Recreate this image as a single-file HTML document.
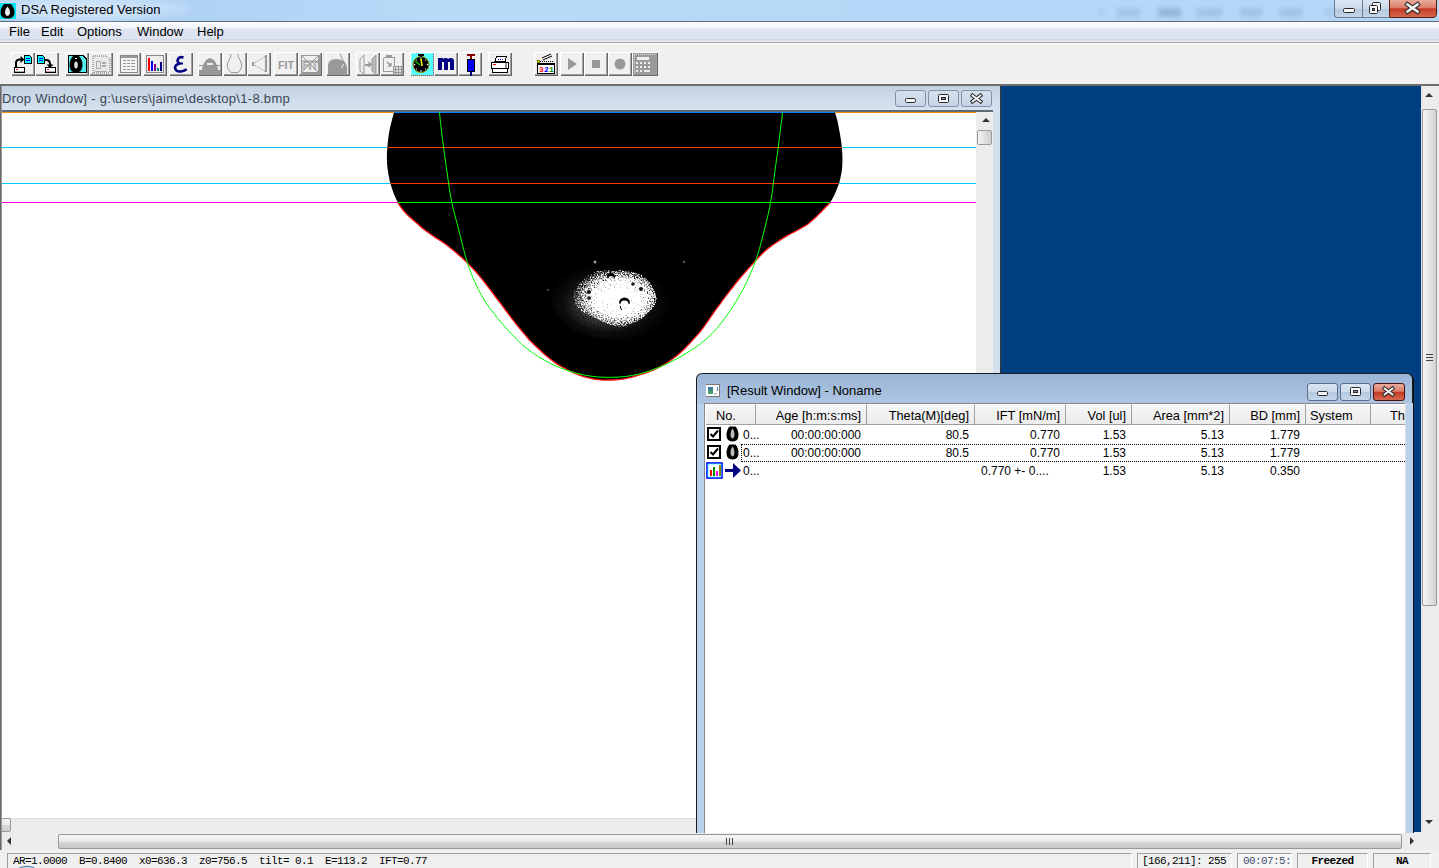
<!DOCTYPE html>
<html><head><meta charset="utf-8">
<style>
*{margin:0;padding:0;box-sizing:border-box}
html,body{width:1439px;height:868px;overflow:hidden;background:#f0f0f0;font-family:"Liberation Sans",sans-serif;font-size:12px;color:#000}
.a{position:absolute}
#title{left:0;top:0;width:1439px;height:22px;background:linear-gradient(to right,#a9cdf1 0%,#b9d9f8 30%,#b5d6f7 100%);border-bottom:1px solid #5d6b7c}
#menu{left:0;top:22px;width:1439px;height:21px;background:linear-gradient(#fbfcfe 0px,#f1f4fa 6px,#dfe4f2 7px,#dde3f1 17px,#c5ccdb 18px,#eef0f6 19px,#eef0f6 20px);border-bottom:1px solid #a0a0a0}
#menu span{position:absolute;top:2px;margin-left:1px;font-size:13px;color:#000}
#toolbar{left:0;top:43px;width:1439px;height:41px;background:#f0f0f0;border-top:1px solid #fff}
.tb{position:absolute;background:#f0f0f0;box-shadow:inset 1px 1px 0 #fff,inset -1px -1px 0 #696969,inset -2px -2px 0 #a0a0a0}
#mdi{left:0;top:84px;width:1439px;height:766px;background:#f0f0f0;border-top:2px solid #6e6e6e}
#blue{left:1001px;top:86px;width:420px;height:746px;background:#003f7f}
.wbtn{position:absolute;border:1px solid #6b7b90;border-radius:3px;background:linear-gradient(#dbe6f3 0%,#cbd9ea 50%,#b4c8e0 51%,#c5d6ea 100%)}
.hdr{position:absolute;top:0;height:21px;border-right:1px solid #a0a0a0;box-shadow:1px 0 0 #fff;font-size:12.8px;line-height:22px;padding:0 4px;text-align:right;white-space:nowrap;overflow:hidden}
.cell{position:absolute;font-size:12px;line-height:20px;text-align:right;white-space:nowrap}
.st{position:absolute;top:853px;height:15px;border-top:1px solid #a0a0a0;border-left:1px solid #a0a0a0;border-right:1px solid #fff;font-family:"Liberation Mono",monospace;font-size:11px;letter-spacing:-0.6px;line-height:15px;white-space:pre}
</style></head><body>
<div id="title" class="a">
  <div class="a" style="left:-20px;top:-4px;width:210px;height:26px;background:radial-gradient(ellipse at 45% 50%,rgba(225,238,250,.85) 0%,rgba(215,232,250,.5) 55%,rgba(190,218,247,0) 80%)"></div>
  <div class="a" style="left:1090px;top:7px;width:240px;height:12px;filter:blur(2.5px);opacity:.6">
   <div class="a" style="left:9px;top:2px;width:5px;height:7px;background:#8aa8c8;opacity:.5"></div>
   <div class="a" style="left:27px;top:1px;width:23px;height:9px;background:#7d9cc0;opacity:.55"></div>
   <div class="a" style="left:68px;top:1px;width:23px;height:9px;background:#6a8ab0;opacity:.7"></div>
   <div class="a" style="left:107px;top:1px;width:25px;height:9px;background:#7d9cc0;opacity:.55"></div>
   <div class="a" style="left:150px;top:1px;width:22px;height:9px;background:#7d9cc0;opacity:.55"></div>
   <div class="a" style="left:189px;top:1px;width:23px;height:9px;background:#7d9cc0;opacity:.55"></div>
   <div class="a" style="left:235px;top:1px;width:10px;height:9px;background:#8aa8c8;opacity:.4"></div>
  </div>
  <div class="a" style="left:0;top:3px;width:16px;height:16px;background:#00e6f0"><svg width="16" height="16"><path d="M4 1 H11 Q14.5 5 14.5 9.5 Q14.5 15.5 7.5 15.5 Q0.5 15.5 0.5 9.5 Q0.5 5 4 1Z" fill="#000"/><path d="M7.5 3.5 Q10 6 10 9 Q10 12.5 7.5 13 Q5 12.5 5 9 Q5 6 7.5 3.5Z" fill="#eee"/></svg></div>
  <div class="a" style="left:21px;top:2px;font-size:13px;">DSA Registered Version</div>
  <div class="wbtn" style="left:1334px;top:-1px;width:29px;height:19px;border-radius:0 0 0 4px;border-right:none"></div>
  <div class="wbtn" style="left:1362px;top:-1px;width:27px;height:19px;border-radius:0;border-left:1px solid #6b7b90;border-right:none"></div>
  <div class="wbtn" style="left:1389px;top:-1px;width:48px;height:19px;border-radius:0 0 4px 0;border-color:#5a1a10;background:linear-gradient(#e9a99c 0%,#dc7e6c 45%,#c53a22 52%,#d56a52 100%)"></div>
</div>
<div id="menu" class="a">
  <span style="left:8px">File</span><span style="left:40px">Edit</span><span style="left:76px">Options</span><span style="left:136px">Window</span><span style="left:196px">Help</span>
</div>
<div id="toolbar" class="a"></div>
<div class="tb" style="left:11px;top:52px;width:24px;height:24px"><svg width="24" height="24" style="position:absolute;left:0;top:0" shape-rendering="crispEdges"><rect x="3.5" y="15.5" width="10" height="5" fill="#fff" stroke="#000"/><rect x="5" y="17" width="2" height="1" fill="#f00"/><rect x="4" y="19" width="9" height="1" fill="#aaa"/><path d="M5 15 V11 Q5 7.5 9 7.5 H10" fill="none" stroke="#000" stroke-width="2" shape-rendering="auto"/><path d="M9.5 4 L13.5 7.5 L9.5 11Z" fill="#000" shape-rendering="auto"/><path d="M13.5 3.5 H18.5 L20.5 5.5 V11.5 H13.5Z" fill="#0ff" stroke="#000"/><path d="M15 6.5h4M15 8.5h4" stroke="#00c"/></svg></div>
<div class="tb" style="left:35px;top:52px;width:24px;height:24px"><svg width="24" height="24" style="position:absolute;left:0;top:0" shape-rendering="crispEdges"><rect x="10.5" y="15.5" width="10" height="5" fill="#fff" stroke="#000"/><rect x="12" y="17" width="2" height="1" fill="#f00"/><rect x="11" y="19" width="9" height="1" fill="#aaa"/><path d="M10 8 H11 Q15 8 15 12 V13" fill="none" stroke="#000" stroke-width="2" shape-rendering="auto"/><path d="M11.5 12.5 L15 16 L18.5 12.5Z" fill="#000" shape-rendering="auto"/><path d="M2.5 3.5 H7.5 L9.5 5.5 V11.5 H2.5Z" fill="#0ff" stroke="#000"/><path d="M4 6.5h4M4 8.5h4" stroke="#00c"/></svg></div>
<div class="tb" style="left:65px;top:52px;width:24px;height:24px"><svg width="24" height="24" style="position:absolute;left:0;top:0" shape-rendering="crispEdges"><path d="M3.5 3.5 H18 L21.5 7 V20.5 H3.5Z" fill="#5ee" stroke="#000" stroke-width="1.5"/><path d="M3.5 3.5 H18 L21.5 7 V20.5 H3.5Z" fill="none" stroke="#000" stroke-width="1"/><g shape-rendering="auto"><path d="M8 4 H14 Q17.5 8 17.5 13 Q17.5 20.5 11 20.5 Q4.5 20.5 4.5 13 Q4.5 8 8 4Z" fill="#000"/><ellipse cx="11" cy="13" rx="1.8" ry="3.6" fill="#ddd"/><rect x="10" y="6" width="2" height="1" fill="#fff"/></g></svg></div>
<div class="tb" style="left:89px;top:52px;width:24px;height:24px"><svg width="24" height="24" style="position:absolute;left:0;top:0" shape-rendering="crispEdges"><path d="M3.5 3.5 H17 L20.5 7 V20.5 H3.5Z" fill="#e8e8e8" stroke="#aaa" stroke-width="2" stroke-dasharray="1 1"/><rect x="7.5" y="9.5" width="4" height="7" fill="none" stroke="#aaa"/><path d="M13 11h4M13 14h4" stroke="#aaa" stroke-width="2"/><path d="M6 19h12" stroke="#aaa"/></svg></div>
<div class="tb" style="left:117px;top:52px;width:24px;height:24px"><svg width="24" height="24" style="position:absolute;left:0;top:0" shape-rendering="crispEdges"><rect x="3.5" y="3.5" width="17" height="17" fill="#f4f4f4" stroke="#888"/><rect x="4" y="4" width="16" height="2" fill="#999"/><path d="M6 8.5h3M10 8.5h3M14 8.5h4M6 11.5h3M10 11.5h3M14 11.5h4M6 14.5h3M10 14.5h3M14 14.5h4M6 17.5h3M10 17.5h3M14 17.5h4" stroke="#999"/></svg></div>
<div class="tb" style="left:143px;top:52px;width:24px;height:24px"><svg width="24" height="24" style="position:absolute;left:0;top:0" shape-rendering="crispEdges"><rect x="3.5" y="3.5" width="17" height="17" fill="#eee" stroke="#888"/><rect x="5" y="6" width="2" height="13" fill="#f00"/><rect x="8" y="9" width="2" height="10" fill="#00f"/><rect x="11" y="12" width="2" height="7" fill="#808"/><rect x="14" y="16" width="2" height="3" fill="#088"/><rect x="17" y="10" width="2" height="9" fill="#008"/></svg></div>
<div class="tb" style="left:169px;top:52px;width:24px;height:24px"><svg width="24" height="24" style="position:absolute;left:0;top:0" shape-rendering="crispEdges"><g shape-rendering="auto"><path d="M14.5 5.5 Q9 4 8.5 9 Q9 11 11 11.5 Q6 12.5 6 16 Q7 20 12 19.5 Q16 19 17.5 17" fill="none" stroke="#000080" stroke-width="2.6"/><path d="M10 11.5 H14" stroke="#000080" stroke-width="2"/></g></svg></div>
<div class="tb" style="left:198px;top:52px;width:24px;height:24px"><svg width="24" height="24" style="position:absolute;left:0;top:0" shape-rendering="crispEdges"><rect x="1" y="18" width="22" height="5" fill="#999"/><g shape-rendering="auto"><path d="M4 18 Q5 8 12 6 Q19 8 20 18Z" fill="#999"/></g><rect x="9" y="11" width="6" height="2" fill="#eee"/><path d="M1 13.5 H6 M18 13.5 H23" stroke="#999"/></svg></div>
<div class="tb" style="left:223px;top:52px;width:24px;height:24px"><svg width="24" height="24" style="position:absolute;left:0;top:0" shape-rendering="crispEdges"><g shape-rendering="auto"><path d="M8 2 Q8 6 5.5 9 Q3 13 5 17 L8 20.5 H15 L18 17 Q20 13 17.5 9 Q15 6 15 2" fill="none" stroke="#999"/></g></svg></div>
<div class="tb" style="left:247px;top:52px;width:24px;height:24px"><svg width="24" height="24" style="position:absolute;left:0;top:0" shape-rendering="crispEdges"><g shape-rendering="auto"><path d="M18 4.5 L6 12 L18 19.5" fill="none" stroke="#999" stroke-dasharray="1.5 1.2"/></g><rect x="5" y="10" width="2" height="4" fill="#999"/><rect x="18" y="3" width="2" height="17" fill="#999"/></svg></div>
<div class="tb" style="left:274px;top:52px;width:24px;height:24px"><svg width="24" height="24" style="position:absolute;left:0;top:0" shape-rendering="crispEdges"><text x="4" y="17" font-family="Liberation Sans" font-size="11.5" font-weight="bold" fill="#999" shape-rendering="auto" textLength="16" lengthAdjust="spacingAndGlyphs">FIT</text></svg></div>
<div class="tb" style="left:298px;top:52px;width:24px;height:24px"><svg width="24" height="24" style="position:absolute;left:0;top:0" shape-rendering="crispEdges"><path d="M23 1 V23 H1Z" fill="#999"/><rect x="3.5" y="3.5" width="17" height="17" fill="#eee" stroke="#999"/><g shape-rendering="auto"><path d="M3 3 L21 21 M21 3 L3 21" stroke="#999"/></g><text x="4" y="17" font-family="Liberation Sans" font-size="11.5" font-weight="bold" fill="none" stroke="#999" stroke-width=".8" textLength="16" lengthAdjust="spacingAndGlyphs">FIT</text></svg></div>
<div class="tb" style="left:326px;top:52px;width:24px;height:24px"><svg width="24" height="24" style="position:absolute;left:0;top:0" shape-rendering="crispEdges"><g shape-rendering="auto"><path d="M2 23 V14 Q2 7 10 7 Q21 7 21 17 V23Z" fill="#999"/><path d="M14 1.5 L21 18" stroke="#999"/><path d="M16 16 Q16 13 18 12" stroke="#eee" fill="none"/></g></svg></div>
<div class="tb" style="left:356px;top:52px;width:24px;height:24px"><svg width="24" height="24" style="position:absolute;left:0;top:0" shape-rendering="crispEdges"><g shape-rendering="auto"><path d="M8 3 L4 7 V19 L8 22Z" fill="none" stroke="#999"/><path d="M20 3 L16 7 V19 L20 22Z" fill="#bbb" stroke="#999"/></g><path d="M9 12.5 H13" stroke="#999" stroke-width="2"/><g shape-rendering="auto"><path d="M12.5 9 L16 12.5 L12.5 16Z" fill="#999"/></g></svg></div>
<div class="tb" style="left:380px;top:52px;width:24px;height:24px"><svg width="24" height="24" style="position:absolute;left:0;top:0" shape-rendering="crispEdges"><rect x="3.5" y="5.5" width="11" height="14" rx="1.5" fill="none" stroke="#999"/><rect x="6" y="3" width="6" height="3" fill="#999"/><g shape-rendering="auto"><path d="M7 10 L11 14 M11 14 V11 M11 14 H8" stroke="#999" stroke-width="1.5"/></g><rect x="13.5" y="14.5" width="8" height="8" fill="#ddd" stroke="#999"/><path d="M15.5 15v7M18.5 15v7M14 17.5h7M14 20.5h7" stroke="#999"/></svg></div>
<div class="tb" style="left:410px;top:52px;width:24px;height:24px"><svg width="24" height="24" style="position:absolute;left:0;top:0" shape-rendering="crispEdges"><rect x="1" y="1" width="22" height="22" fill="#5ff"/><path d="M1 1h22v22h-22z" fill="none" stroke="#eee" stroke-dasharray="1 1" opacity=".6"/><g shape-rendering="auto"><circle cx="11" cy="12.5" r="8" fill="#000" stroke="#aa9900" stroke-width="1"/></g><rect x="8" y="2" width="6" height="2" fill="#000"/><rect x="10" y="3" width="2" height="2" fill="#000"/><g shape-rendering="auto"><path d="M5 9 L10 13" stroke="#0c0" stroke-width="1.3"/><path d="M11 7 L12 14" stroke="#ff0" stroke-width="1.6"/><circle cx="11" cy="6" r=".8" fill="#fff"/><circle cx="11" cy="19" r=".8" fill="#fff"/><circle cx="4.5" cy="12.5" r=".8" fill="#fff"/><circle cx="17.5" cy="12.5" r=".8" fill="#fff"/><circle cx="6.5" cy="8" r=".6" fill="#fff"/><circle cx="15.5" cy="8" r=".6" fill="#fff"/><circle cx="6.5" cy="17" r=".6" fill="#fff"/><circle cx="15.5" cy="17" r=".6" fill="#fff"/></g></svg></div>
<div class="tb" style="left:434px;top:52px;width:24px;height:24px"><svg width="24" height="24" style="position:absolute;left:0;top:0" shape-rendering="crispEdges"><path d="M4 6 H9 V7 Q10 6 12 6 Q13.5 6 14 7 Q15 6 17 6 Q20 6 20 9 V18 H16 V10 H14 V18 H10 V10 H8 V18 H4Z" fill="#000080" shape-rendering="auto"/></svg></div>
<div class="tb" style="left:458px;top:52px;width:24px;height:24px"><svg width="24" height="24" style="position:absolute;left:0;top:0" shape-rendering="crispEdges"><rect x="9" y="2" width="8" height="2" fill="#800000"/><rect x="12" y="4" width="2" height="4" fill="#800000"/><rect x="9.5" y="7.5" width="7" height="12" fill="#00f" stroke="#000"/><rect x="12" y="20" width="2" height="4" fill="#000080"/></svg></div>
<div class="tb" style="left:488px;top:52px;width:24px;height:24px"><svg width="24" height="24" style="position:absolute;left:0;top:0" shape-rendering="crispEdges"><path d="M8.5 4.5 H18.5 L17 9.5 H7Z" fill="#fff" stroke="#000"/><path d="M10 7 h6" stroke="#00c" stroke-dasharray="1 1"/><rect x="3.5" y="10.5" width="17" height="6" rx="1" fill="#fff" stroke="#000" stroke-width="1.3"/><rect x="4.5" y="16.5" width="15" height="4" rx="1" fill="#fff" stroke="#000" stroke-width="1.3"/><rect x="5" y="12" width="3" height="1" fill="#f00"/><rect x="17" y="11" width="2" height="5" fill="#999"/></svg></div>
<div class="tb" style="left:534px;top:52px;width:24px;height:24px"><svg width="24" height="24" style="position:absolute;left:0;top:0" shape-rendering="crispEdges"><g shape-rendering="auto"><path d="M8 6 L17 2 M9 8 L18 4" stroke="#000" stroke-width="1"/></g><rect x="3" y="8" width="2.5" height="2.5" fill="#ff0" stroke="#000" stroke-width=".5"/><rect x="3.5" y="11.5" width="17" height="10" fill="#fff" stroke="#000" stroke-width="1.4"/><rect x="4" y="11" width="16" height="2" fill="#000"/><path d="M6 9.5 L19 9.5" stroke="#000" stroke-dasharray="1 1"/><text x="5" y="20" font-family="Liberation Mono" font-size="8" font-weight="bold" fill="#f00">3</text><text x="10" y="20" font-family="Liberation Mono" font-size="8" font-weight="bold" fill="#00f">2</text><text x="15" y="20" font-family="Liberation Mono" font-size="8" font-weight="bold" fill="#080">1</text></svg></div>
<div class="tb" style="left:560px;top:52px;width:24px;height:24px"><svg width="24" height="24" style="position:absolute;left:0;top:0" shape-rendering="crispEdges"><path d="M8 6 L17 12 L8 18Z" fill="#999" shape-rendering="auto"/></svg></div>
<div class="tb" style="left:584px;top:52px;width:24px;height:24px"><svg width="24" height="24" style="position:absolute;left:0;top:0" shape-rendering="crispEdges"><rect x="8" y="8" width="8" height="8" fill="#999"/></svg></div>
<div class="tb" style="left:608px;top:52px;width:24px;height:24px"><svg width="24" height="24" style="position:absolute;left:0;top:0" shape-rendering="crispEdges"><circle cx="12" cy="12" r="5.5" fill="#999" shape-rendering="auto"/></svg></div>
<div class="tb" style="left:632px;top:52px;width:26px;height:24px"><svg width="26" height="24" style="position:absolute;left:0;top:0" shape-rendering="crispEdges"><rect x="1" y="1" width="24" height="22" fill="#9a9a9a"/><path d="M2 2.5h22" stroke="#ddd" stroke-dasharray="1 1"/><path d="M2 3v19" stroke="#ddd" stroke-dasharray="1 1"/><rect x="5" y="5" width="12" height="3" fill="#eee"/><path d="M4 10.5h2M8 10.5h2M12 10.5h2M16 10.5h2M4 14.5h2M8 14.5h2M12 14.5h2M16 14.5h2M4 18.5h2M8 18.5h2M12 18.5h6" stroke="#eee" stroke-width="2"/></svg></div>
<div id="mdi" class="a"></div>
<div id="blue" class="a"></div>
<!-- drop window -->
<div class="a" style="left:0;top:86px;width:1001px;height:764px;background:#d3e0ee;border-left:2px solid #707070;border-right:1px solid #3a3a3a">
  <div class="a" style="left:0;top:0;width:998px;height:24px;background:linear-gradient(#c3d2e2,#d6e2ef)"></div>
  <div class="a" style="left:0;top:5px;font-size:13px;letter-spacing:0.3px;color:#3a4656">Drop Window] - g:\users\jaime\desktop\1-8.bmp</div>
  <div class="wbtn" style="left:893px;top:4px;width:31px;height:17px;border-color:#8090a8;background:linear-gradient(#d5e0ec,#c5d4e5)"></div>
  <div class="wbtn" style="left:926px;top:4px;width:31px;height:17px;border-color:#8090a8;background:linear-gradient(#d5e0ec,#c5d4e5)"></div>
  <div class="wbtn" style="left:959px;top:4px;width:31px;height:17px;border-color:#8090a8;background:linear-gradient(#d5e0ec,#c5d4e5)"></div>
  <div class="a" style="left:-2px;top:24px;width:993px;height:2px;background:#5f6a75"></div>
  <div class="a" style="left:974px;top:26px;width:17px;height:706px;background:#ececec"></div>
  <div class="a" style="left:980px;top:32px;width:0;height:0;border-left:4px solid transparent;border-right:4px solid transparent;border-bottom:4px solid #333"></div>
  <div class="a" style="left:975px;top:44px;width:15px;height:15px;border:1px solid #999;border-radius:2px;background:linear-gradient(to right,#f5f5f5,#e0e0e0 50%,#cfcfcf)"></div>
  <div class="a" style="left:-2px;top:732px;width:976px;height:15px;background:#ececec;border-top:1px solid #e0e0e0"></div>
  <div class="a" style="left:-4px;top:732px;width:13px;height:14px;border:1px solid #999;border-radius:2px;background:linear-gradient(#f3f3f3,#ececec 50%,#d6d6d6 51%,#cfcfcf)"></div>
</div>
<svg class="a" style="left:0;top:0" width="1439" height="868">
 <defs><clipPath id="cd"><path d="M834.8,112.0 C835.2,113.2 836.3,116.3 837.1,119.5 C837.9,122.7 838.7,127.2 839.4,131.0 C840.1,134.8 840.8,138.4 841.3,142.6 C841.8,146.8 842.3,152.2 842.4,156.4 C842.5,160.6 842.4,164.5 842.1,167.9 C841.8,171.3 841.1,174.5 840.6,177.1 C840.1,179.7 840.0,180.6 839.0,183.5 C838.0,186.4 836.1,191.2 834.6,194.4 C833.1,197.6 831.5,200.3 830.1,202.4 C828.7,204.5 827.4,205.4 826.0,206.8 C824.6,208.3 823.2,209.7 821.8,211.2 C820.4,212.6 819.0,214.0 817.6,215.4 C816.1,216.8 814.7,218.2 813.2,219.6 C811.7,220.9 810.2,222.2 808.6,223.4 C807.0,224.6 805.3,225.7 803.6,226.8 C801.9,227.8 800.2,228.7 798.4,229.7 C796.6,230.7 794.8,231.5 793.1,232.5 C791.3,233.4 789.5,234.4 787.8,235.4 C786.0,236.4 784.3,237.4 782.6,238.4 C780.9,239.5 779.2,240.6 777.5,241.7 C775.8,242.8 774.1,243.9 772.5,245.1 C770.9,246.3 769.3,247.5 767.7,248.7 C766.2,250.0 764.7,251.3 763.2,252.7 C761.8,254.1 760.4,255.5 759.0,257.0 C757.6,258.4 756.3,259.9 754.9,261.4 C753.6,262.9 752.2,264.4 750.9,265.9 C749.5,267.4 748.2,268.9 746.8,270.4 C745.5,271.9 744.2,273.4 742.8,274.9 C741.5,276.4 740.2,277.9 738.9,279.5 C737.7,281.0 736.4,282.6 735.1,284.1 C733.9,285.7 732.6,287.3 731.4,288.9 C730.1,290.4 728.9,292.0 727.7,293.6 C726.4,295.2 725.2,296.8 724.0,298.4 C722.8,300.0 721.6,301.7 720.5,303.3 C719.3,304.9 718.1,306.5 716.9,308.2 C715.7,309.8 714.6,311.4 713.4,313.1 C712.2,314.7 711.1,316.4 710.0,318.0 C708.9,319.7 707.8,321.4 706.6,323.0 C705.5,324.7 704.3,326.3 703.1,327.9 C701.9,329.5 700.6,331.1 699.3,332.6 C698.0,334.1 696.7,335.6 695.4,337.1 C694.0,338.6 692.7,340.1 691.3,341.6 C690.0,343.1 688.6,344.6 687.2,346.0 C685.8,347.5 684.5,348.9 683.0,350.3 C681.5,351.7 680.1,353.0 678.5,354.3 C677.0,355.6 675.4,356.9 673.8,358.1 C672.2,359.3 670.6,360.4 668.9,361.5 C667.2,362.6 665.5,363.7 663.8,364.7 C662.0,365.7 660.3,366.7 658.5,367.6 C656.7,368.5 654.9,369.4 653.1,370.2 C651.2,371.0 649.4,371.7 647.5,372.4 C645.6,373.1 643.7,373.6 641.8,374.2 C639.8,374.8 637.9,375.4 636.0,376.0 C634.1,376.5 632.1,377.1 630.2,377.6 C628.3,378.1 626.3,378.5 624.3,378.9 C622.4,379.2 620.4,379.4 618.4,379.6 C616.4,379.8 614.4,379.9 612.4,380.0 C610.4,380.1 608.4,380.1 606.4,380.1 C604.4,380.1 602.4,380.1 600.4,379.9 C598.4,379.8 596.4,379.5 594.4,379.2 C592.5,378.9 590.5,378.4 588.6,377.9 C586.6,377.4 584.7,376.9 582.8,376.3 C580.9,375.6 579.0,375.0 577.1,374.2 C575.2,373.5 573.4,372.7 571.6,371.9 C569.8,371.1 567.9,370.2 566.2,369.2 C564.4,368.3 562.6,367.3 560.9,366.3 C559.2,365.3 557.5,364.2 555.8,363.1 C554.2,362.0 552.5,360.8 550.9,359.6 C549.3,358.4 547.8,357.1 546.2,355.8 C544.7,354.5 543.2,353.2 541.7,351.8 C540.2,350.5 538.8,349.1 537.3,347.7 C535.9,346.3 534.4,344.9 533.0,343.5 C531.6,342.1 530.2,340.6 528.8,339.2 C527.5,337.7 526.2,336.2 524.9,334.6 C523.6,333.1 522.3,331.5 521.0,330.0 C519.7,328.4 518.4,326.9 517.2,325.3 C515.9,323.8 514.7,322.2 513.5,320.6 C512.2,319.0 511.0,317.4 509.8,315.8 C508.6,314.2 507.4,312.6 506.2,311.0 C505.0,309.4 503.8,307.7 502.6,306.1 C501.4,304.5 500.2,302.9 499.0,301.3 C497.7,299.7 496.5,298.1 495.3,296.5 C494.1,294.9 492.9,293.3 491.7,291.7 C490.5,290.1 489.3,288.5 488.1,286.9 C486.8,285.3 485.6,283.7 484.4,282.1 C483.1,280.5 481.9,278.9 480.6,277.4 C479.3,275.8 478.0,274.3 476.7,272.8 C475.4,271.3 474.0,269.8 472.6,268.3 C471.3,266.9 469.9,265.4 468.4,264.0 C467.0,262.6 465.6,261.2 464.1,259.8 C462.6,258.4 461.1,257.1 459.6,255.8 C458.1,254.5 456.6,253.1 455.1,251.8 C453.5,250.5 452.0,249.2 450.4,248.0 C448.9,246.7 447.3,245.5 445.7,244.3 C444.0,243.1 442.4,242.0 440.7,240.9 C439.0,239.8 437.3,238.7 435.6,237.6 C434.0,236.5 432.3,235.5 430.6,234.3 C429.0,233.2 427.3,232.0 425.8,230.8 C424.2,229.6 422.6,228.3 421.1,227.0 C419.6,225.7 418.1,224.3 416.6,223.0 C415.1,221.7 413.5,220.4 412.0,219.0 C410.5,217.7 409.0,216.4 407.6,215.0 C406.2,213.6 404.8,212.1 403.5,210.6 C402.3,209.1 400.9,207.2 400.0,205.8 C399.1,204.4 398.9,204.3 397.9,202.4 C396.9,200.5 395.4,197.6 394.1,194.4 C392.9,191.2 391.2,186.4 390.4,183.5 C389.5,180.6 389.5,179.7 389.0,177.1 C388.5,174.5 387.9,171.3 387.5,167.9 C387.1,164.5 386.8,160.6 386.9,156.4 C386.9,152.2 387.4,146.8 387.8,142.6 C388.2,138.4 388.7,134.8 389.4,131.0 C390.1,127.2 391.3,122.7 392.1,119.5 C392.9,116.3 393.8,113.2 394.1,112.0 Z"/></clipPath>
 <clipPath id="low"><rect x="0" y="203" width="1000" height="300"/></clipPath>
 <radialGradient id="halo" cx="45%" cy="55%" r="50%"><stop offset="0" stop-color="#fff" stop-opacity=".6"/><stop offset="0.45" stop-color="#fff" stop-opacity=".3"/><stop offset="0.7" stop-color="#fff" stop-opacity=".08"/><stop offset="1" stop-color="#fff" stop-opacity="0"/></radialGradient>
 <radialGradient id="core" cx="55%" cy="50%" r="55%"><stop offset="0" stop-color="#fff" stop-opacity="1"/><stop offset="0.55" stop-color="#fff" stop-opacity=".85"/><stop offset="1" stop-color="#fff" stop-opacity="0.4"/></radialGradient>
 <filter id="nz" x="-30%" y="-30%" width="160%" height="160%">
  <feTurbulence type="fractalNoise" baseFrequency="0.7" numOctaves="2" seed="7" result="n"/>
  <feColorMatrix in="n" type="matrix" values="0 0 0 0 0  0 0 0 0 0  0 0 0 0 0  1 0 0 0 0" result="na"/>
  <feComposite in="SourceAlpha" in2="na" operator="arithmetic" k1="0" k2="3" k3="-3" k4="0.25" result="c"/>
  <feColorMatrix in="c" type="matrix" values="0 0 0 0 1  0 0 0 0 1  0 0 0 0 1  0 0 0 1 0"/>
 </filter>
 <filter id="nz2" x="-30%" y="-30%" width="160%" height="160%">
  <feTurbulence type="fractalNoise" baseFrequency="0.9" numOctaves="1" seed="3" result="n"/>
  <feColorMatrix in="n" type="matrix" values="0 0 0 0 0  0 0 0 0 0  0 0 0 0 0  1 0 0 0 0" result="na"/>
  <feComposite in="SourceAlpha" in2="na" operator="arithmetic" k1="1.3" k2="0" k3="0" k4="0" result="c"/>
  <feColorMatrix in="c" type="matrix" values="0 0 0 0 1  0 0 0 0 1  0 0 0 0 1  0 0 0 1 0"/>
 </filter>
 </defs>
 <rect x="2" y="112" width="974" height="706" fill="#fff"/>
 <line x1="2" x2="976" y1="112.5" y2="112.5" stroke="#ff8c00" stroke-width="1"/>
 <line x1="2" x2="976" y1="147.5" y2="147.5" stroke="#00c8ff" stroke-width="1"/>
 <line x1="2" x2="976" y1="183.5" y2="183.5" stroke="#00c8ff" stroke-width="1"/>
 <line x1="2" x2="976" y1="202.5" y2="202.5" stroke="#ff00dc" stroke-width="1"/>
 <path d="M834.8,112.0 C835.2,113.2 836.3,116.3 837.1,119.5 C837.9,122.7 838.7,127.2 839.4,131.0 C840.1,134.8 840.8,138.4 841.3,142.6 C841.8,146.8 842.3,152.2 842.4,156.4 C842.5,160.6 842.4,164.5 842.1,167.9 C841.8,171.3 841.1,174.5 840.6,177.1 C840.1,179.7 840.0,180.6 839.0,183.5 C838.0,186.4 836.1,191.2 834.6,194.4 C833.1,197.6 831.5,200.3 830.1,202.4 C828.7,204.5 827.4,205.4 826.0,206.8 C824.6,208.3 823.2,209.7 821.8,211.2 C820.4,212.6 819.0,214.0 817.6,215.4 C816.1,216.8 814.7,218.2 813.2,219.6 C811.7,220.9 810.2,222.2 808.6,223.4 C807.0,224.6 805.3,225.7 803.6,226.8 C801.9,227.8 800.2,228.7 798.4,229.7 C796.6,230.7 794.8,231.5 793.1,232.5 C791.3,233.4 789.5,234.4 787.8,235.4 C786.0,236.4 784.3,237.4 782.6,238.4 C780.9,239.5 779.2,240.6 777.5,241.7 C775.8,242.8 774.1,243.9 772.5,245.1 C770.9,246.3 769.3,247.5 767.7,248.7 C766.2,250.0 764.7,251.3 763.2,252.7 C761.8,254.1 760.4,255.5 759.0,257.0 C757.6,258.4 756.3,259.9 754.9,261.4 C753.6,262.9 752.2,264.4 750.9,265.9 C749.5,267.4 748.2,268.9 746.8,270.4 C745.5,271.9 744.2,273.4 742.8,274.9 C741.5,276.4 740.2,277.9 738.9,279.5 C737.7,281.0 736.4,282.6 735.1,284.1 C733.9,285.7 732.6,287.3 731.4,288.9 C730.1,290.4 728.9,292.0 727.7,293.6 C726.4,295.2 725.2,296.8 724.0,298.4 C722.8,300.0 721.6,301.7 720.5,303.3 C719.3,304.9 718.1,306.5 716.9,308.2 C715.7,309.8 714.6,311.4 713.4,313.1 C712.2,314.7 711.1,316.4 710.0,318.0 C708.9,319.7 707.8,321.4 706.6,323.0 C705.5,324.7 704.3,326.3 703.1,327.9 C701.9,329.5 700.6,331.1 699.3,332.6 C698.0,334.1 696.7,335.6 695.4,337.1 C694.0,338.6 692.7,340.1 691.3,341.6 C690.0,343.1 688.6,344.6 687.2,346.0 C685.8,347.5 684.5,348.9 683.0,350.3 C681.5,351.7 680.1,353.0 678.5,354.3 C677.0,355.6 675.4,356.9 673.8,358.1 C672.2,359.3 670.6,360.4 668.9,361.5 C667.2,362.6 665.5,363.7 663.8,364.7 C662.0,365.7 660.3,366.7 658.5,367.6 C656.7,368.5 654.9,369.4 653.1,370.2 C651.2,371.0 649.4,371.7 647.5,372.4 C645.6,373.1 643.7,373.6 641.8,374.2 C639.8,374.8 637.9,375.4 636.0,376.0 C634.1,376.5 632.1,377.1 630.2,377.6 C628.3,378.1 626.3,378.5 624.3,378.9 C622.4,379.2 620.4,379.4 618.4,379.6 C616.4,379.8 614.4,379.9 612.4,380.0 C610.4,380.1 608.4,380.1 606.4,380.1 C604.4,380.1 602.4,380.1 600.4,379.9 C598.4,379.8 596.4,379.5 594.4,379.2 C592.5,378.9 590.5,378.4 588.6,377.9 C586.6,377.4 584.7,376.9 582.8,376.3 C580.9,375.6 579.0,375.0 577.1,374.2 C575.2,373.5 573.4,372.7 571.6,371.9 C569.8,371.1 567.9,370.2 566.2,369.2 C564.4,368.3 562.6,367.3 560.9,366.3 C559.2,365.3 557.5,364.2 555.8,363.1 C554.2,362.0 552.5,360.8 550.9,359.6 C549.3,358.4 547.8,357.1 546.2,355.8 C544.7,354.5 543.2,353.2 541.7,351.8 C540.2,350.5 538.8,349.1 537.3,347.7 C535.9,346.3 534.4,344.9 533.0,343.5 C531.6,342.1 530.2,340.6 528.8,339.2 C527.5,337.7 526.2,336.2 524.9,334.6 C523.6,333.1 522.3,331.5 521.0,330.0 C519.7,328.4 518.4,326.9 517.2,325.3 C515.9,323.8 514.7,322.2 513.5,320.6 C512.2,319.0 511.0,317.4 509.8,315.8 C508.6,314.2 507.4,312.6 506.2,311.0 C505.0,309.4 503.8,307.7 502.6,306.1 C501.4,304.5 500.2,302.9 499.0,301.3 C497.7,299.7 496.5,298.1 495.3,296.5 C494.1,294.9 492.9,293.3 491.7,291.7 C490.5,290.1 489.3,288.5 488.1,286.9 C486.8,285.3 485.6,283.7 484.4,282.1 C483.1,280.5 481.9,278.9 480.6,277.4 C479.3,275.8 478.0,274.3 476.7,272.8 C475.4,271.3 474.0,269.8 472.6,268.3 C471.3,266.9 469.9,265.4 468.4,264.0 C467.0,262.6 465.6,261.2 464.1,259.8 C462.6,258.4 461.1,257.1 459.6,255.8 C458.1,254.5 456.6,253.1 455.1,251.8 C453.5,250.5 452.0,249.2 450.4,248.0 C448.9,246.7 447.3,245.5 445.7,244.3 C444.0,243.1 442.4,242.0 440.7,240.9 C439.0,239.8 437.3,238.7 435.6,237.6 C434.0,236.5 432.3,235.5 430.6,234.3 C429.0,233.2 427.3,232.0 425.8,230.8 C424.2,229.6 422.6,228.3 421.1,227.0 C419.6,225.7 418.1,224.3 416.6,223.0 C415.1,221.7 413.5,220.4 412.0,219.0 C410.5,217.7 409.0,216.4 407.6,215.0 C406.2,213.6 404.8,212.1 403.5,210.6 C402.3,209.1 400.9,207.2 400.0,205.8 C399.1,204.4 398.9,204.3 397.9,202.4 C396.9,200.5 395.4,197.6 394.1,194.4 C392.9,191.2 391.2,186.4 390.4,183.5 C389.5,180.6 389.5,179.7 389.0,177.1 C388.5,174.5 387.9,171.3 387.5,167.9 C387.1,164.5 386.8,160.6 386.9,156.4 C386.9,152.2 387.4,146.8 387.8,142.6 C388.2,138.4 388.7,134.8 389.4,131.0 C390.1,127.2 391.3,122.7 392.1,119.5 C392.9,116.3 393.8,113.2 394.1,112.0 Z" fill="#000"/>
 <path d="M834.8,112.0 C835.2,113.2 836.3,116.3 837.1,119.5 C837.9,122.7 838.7,127.2 839.4,131.0 C840.1,134.8 840.8,138.4 841.3,142.6 C841.8,146.8 842.3,152.2 842.4,156.4 C842.5,160.6 842.4,164.5 842.1,167.9 C841.8,171.3 841.1,174.5 840.6,177.1 C840.1,179.7 840.0,180.6 839.0,183.5 C838.0,186.4 836.1,191.2 834.6,194.4 C833.1,197.6 831.5,200.3 830.1,202.4 C828.7,204.5 827.4,205.4 826.0,206.8 C824.6,208.3 823.2,209.7 821.8,211.2 C820.4,212.6 819.0,214.0 817.6,215.4 C816.1,216.8 814.7,218.2 813.2,219.6 C811.7,220.9 810.2,222.2 808.6,223.4 C807.0,224.6 805.3,225.7 803.6,226.8 C801.9,227.8 800.2,228.7 798.4,229.7 C796.6,230.7 794.8,231.5 793.1,232.5 C791.3,233.4 789.5,234.4 787.8,235.4 C786.0,236.4 784.3,237.4 782.6,238.4 C780.9,239.5 779.2,240.6 777.5,241.7 C775.8,242.8 774.1,243.9 772.5,245.1 C770.9,246.3 769.3,247.5 767.7,248.7 C766.2,250.0 764.7,251.3 763.2,252.7 C761.8,254.1 760.4,255.5 759.0,257.0 C757.6,258.4 756.3,259.9 754.9,261.4 C753.6,262.9 752.2,264.4 750.9,265.9 C749.5,267.4 748.2,268.9 746.8,270.4 C745.5,271.9 744.2,273.4 742.8,274.9 C741.5,276.4 740.2,277.9 738.9,279.5 C737.7,281.0 736.4,282.6 735.1,284.1 C733.9,285.7 732.6,287.3 731.4,288.9 C730.1,290.4 728.9,292.0 727.7,293.6 C726.4,295.2 725.2,296.8 724.0,298.4 C722.8,300.0 721.6,301.7 720.5,303.3 C719.3,304.9 718.1,306.5 716.9,308.2 C715.7,309.8 714.6,311.4 713.4,313.1 C712.2,314.7 711.1,316.4 710.0,318.0 C708.9,319.7 707.8,321.4 706.6,323.0 C705.5,324.7 704.3,326.3 703.1,327.9 C701.9,329.5 700.6,331.1 699.3,332.6 C698.0,334.1 696.7,335.6 695.4,337.1 C694.0,338.6 692.7,340.1 691.3,341.6 C690.0,343.1 688.6,344.6 687.2,346.0 C685.8,347.5 684.5,348.9 683.0,350.3 C681.5,351.7 680.1,353.0 678.5,354.3 C677.0,355.6 675.4,356.9 673.8,358.1 C672.2,359.3 670.6,360.4 668.9,361.5 C667.2,362.6 665.5,363.7 663.8,364.7 C662.0,365.7 660.3,366.7 658.5,367.6 C656.7,368.5 654.9,369.4 653.1,370.2 C651.2,371.0 649.4,371.7 647.5,372.4 C645.6,373.1 643.7,373.6 641.8,374.2 C639.8,374.8 637.9,375.4 636.0,376.0 C634.1,376.5 632.1,377.1 630.2,377.6 C628.3,378.1 626.3,378.5 624.3,378.9 C622.4,379.2 620.4,379.4 618.4,379.6 C616.4,379.8 614.4,379.9 612.4,380.0 C610.4,380.1 608.4,380.1 606.4,380.1 C604.4,380.1 602.4,380.1 600.4,379.9 C598.4,379.8 596.4,379.5 594.4,379.2 C592.5,378.9 590.5,378.4 588.6,377.9 C586.6,377.4 584.7,376.9 582.8,376.3 C580.9,375.6 579.0,375.0 577.1,374.2 C575.2,373.5 573.4,372.7 571.6,371.9 C569.8,371.1 567.9,370.2 566.2,369.2 C564.4,368.3 562.6,367.3 560.9,366.3 C559.2,365.3 557.5,364.2 555.8,363.1 C554.2,362.0 552.5,360.8 550.9,359.6 C549.3,358.4 547.8,357.1 546.2,355.8 C544.7,354.5 543.2,353.2 541.7,351.8 C540.2,350.5 538.8,349.1 537.3,347.7 C535.9,346.3 534.4,344.9 533.0,343.5 C531.6,342.1 530.2,340.6 528.8,339.2 C527.5,337.7 526.2,336.2 524.9,334.6 C523.6,333.1 522.3,331.5 521.0,330.0 C519.7,328.4 518.4,326.9 517.2,325.3 C515.9,323.8 514.7,322.2 513.5,320.6 C512.2,319.0 511.0,317.4 509.8,315.8 C508.6,314.2 507.4,312.6 506.2,311.0 C505.0,309.4 503.8,307.7 502.6,306.1 C501.4,304.5 500.2,302.9 499.0,301.3 C497.7,299.7 496.5,298.1 495.3,296.5 C494.1,294.9 492.9,293.3 491.7,291.7 C490.5,290.1 489.3,288.5 488.1,286.9 C486.8,285.3 485.6,283.7 484.4,282.1 C483.1,280.5 481.9,278.9 480.6,277.4 C479.3,275.8 478.0,274.3 476.7,272.8 C475.4,271.3 474.0,269.8 472.6,268.3 C471.3,266.9 469.9,265.4 468.4,264.0 C467.0,262.6 465.6,261.2 464.1,259.8 C462.6,258.4 461.1,257.1 459.6,255.8 C458.1,254.5 456.6,253.1 455.1,251.8 C453.5,250.5 452.0,249.2 450.4,248.0 C448.9,246.7 447.3,245.5 445.7,244.3 C444.0,243.1 442.4,242.0 440.7,240.9 C439.0,239.8 437.3,238.7 435.6,237.6 C434.0,236.5 432.3,235.5 430.6,234.3 C429.0,233.2 427.3,232.0 425.8,230.8 C424.2,229.6 422.6,228.3 421.1,227.0 C419.6,225.7 418.1,224.3 416.6,223.0 C415.1,221.7 413.5,220.4 412.0,219.0 C410.5,217.7 409.0,216.4 407.6,215.0 C406.2,213.6 404.8,212.1 403.5,210.6 C402.3,209.1 400.9,207.2 400.0,205.8 C399.1,204.4 398.9,204.3 397.9,202.4 C396.9,200.5 395.4,197.6 394.1,194.4 C392.9,191.2 391.2,186.4 390.4,183.5 C389.5,180.6 389.5,179.7 389.0,177.1 C388.5,174.5 387.9,171.3 387.5,167.9 C387.1,164.5 386.8,160.6 386.9,156.4 C386.9,152.2 387.4,146.8 387.8,142.6 C388.2,138.4 388.7,134.8 389.4,131.0 C390.1,127.2 391.3,122.7 392.1,119.5 C392.9,116.3 393.8,113.2 394.1,112.0 Z" fill="none" stroke="#ff1010" stroke-width="1.3" clip-path="url(#low)"/>
 <g clip-path="url(#cd)">
  <g filter="url(#nz2)"><ellipse cx="614" cy="300" rx="62" ry="40" fill="url(#halo)"/></g>
  <g filter="url(#nz)">
   <path d="M573,296 C573,289 581,279 590,274 C596,270 605,268 613,271 C620,269 632,270 640,274 C648,278 655,288 657,298 C657,306 648,314 640,320 C633,324 628,327 619,327 C610,326 603,322 597,319 C590,316 580,312 576,306 C574,303 573,299 573,296Z" fill="url(#core)"/>
  </g>
  <path d="M619,303 A5.5,5.5 0 0 1 630,303 L628.6,304.5 A4,4 0 0 0 620.4,304.5Z" fill="#000"/><path d="M620.4,306 A4,4 0 0 0 622,310" stroke="#000" fill="none"/>
  <path d="M607,277 A4,4 0 0 1 615,277 L614,279 A3,3 0 0 0 608,279Z" fill="#000"/>
  <circle cx="633" cy="284" r="1.8" fill="#111"/><circle cx="641" cy="289" r="2" fill="#111"/><circle cx="589" cy="292" r="2" fill="#111"/><circle cx="589" cy="298" r="1.8" fill="#111"/>
  <circle cx="595" cy="262" r="1.5" fill="#999"/><circle cx="649" cy="283" r="1.3" fill="#aaa"/><circle cx="684" cy="262" r="1.2" fill="#555"/><circle cx="548" cy="290" r="1" fill="#555"/>
  <line x1="2" x2="976" y1="112.5" y2="112.5" stroke="#0080ff" stroke-width="1"/>
  <line x1="2" x2="976" y1="147.5" y2="147.5" stroke="#ff3c00" stroke-width="1"/>
  <line x1="2" x2="976" y1="183.5" y2="183.5" stroke="#ff3c00" stroke-width="1"/>
  <line x1="2" x2="976" y1="202.5" y2="202.5" stroke="#00ff00" stroke-width="1"/>
 </g>
 <path d="M439.3,112.0 C439.6,114.3 440.4,121.3 440.9,126.0 C441.5,130.6 442.0,135.3 442.6,139.9 C443.2,144.6 443.8,149.2 444.4,153.8 C445.1,158.5 445.7,163.1 446.4,167.8 C447.1,172.4 447.7,177.0 448.4,181.7 C449.1,186.3 449.6,191.0 450.5,195.6 C451.3,200.2 452.3,204.7 453.4,209.3 C454.4,213.8 455.8,218.3 456.9,222.8 C458.1,227.4 459.3,231.9 460.4,236.5 C461.6,241.0 462.6,245.6 463.8,250.1 C465.0,254.6 466.2,259.1 467.6,263.6 C469.1,268.0 470.7,272.4 472.5,276.7 C474.3,281.0 476.2,285.3 478.3,289.5 C480.5,293.6 482.8,297.7 485.3,301.6 C487.8,305.6 490.6,309.3 493.5,313.0 C496.3,316.7 499.3,320.3 502.4,323.9 C505.4,327.4 508.6,330.9 511.8,334.2 C515.0,337.6 518.2,341.1 521.6,344.2 C525.1,347.3 528.8,350.1 532.6,352.8 C536.4,355.5 540.4,358.0 544.5,360.3 C548.5,362.5 552.7,364.6 557.0,366.5 C561.3,368.3 565.7,370.0 570.1,371.4 C574.6,372.8 579.1,373.9 583.7,374.9 C588.3,375.8 592.9,376.5 597.5,376.9 C602.2,377.3 606.9,377.4 611.5,377.3 C616.2,377.2 620.9,377.0 625.5,376.5 C630.2,375.9 634.8,375.1 639.3,374.0 C643.8,372.9 648.2,371.4 652.6,369.8 C657.0,368.2 661.3,366.4 665.6,364.5 C669.8,362.5 674.0,360.4 678.1,358.1 C682.2,355.9 686.2,353.5 690.1,350.9 C694.1,348.4 698.0,345.8 701.6,342.9 C705.3,340.0 708.8,336.9 712.0,333.6 C715.3,330.3 718.3,326.7 721.2,323.0 C724.1,319.4 726.8,315.5 729.4,311.6 C732.1,307.8 734.6,303.8 737.0,299.8 C739.4,295.8 741.7,291.8 743.9,287.6 C746.1,283.5 748.0,279.2 749.9,274.9 C751.8,270.7 753.6,266.3 755.2,261.9 C756.8,257.6 758.2,253.1 759.5,248.6 C760.8,244.1 761.9,239.6 763.1,235.0 C764.3,230.5 765.4,225.9 766.5,221.4 C767.6,216.8 768.7,212.3 769.6,207.7 C770.5,203.1 771.3,198.5 772.0,193.9 C772.6,189.2 773.1,184.6 773.8,179.9 C774.4,175.3 775.0,170.7 775.6,166.0 C776.3,161.4 776.9,156.7 777.6,152.1 C778.2,147.5 778.8,142.8 779.4,138.2 C780.0,133.5 780.6,128.5 781.1,124.2 C781.7,120.0 782.4,114.5 782.6,112.6" fill="none" stroke="#00ff00" stroke-width="1"/>
</svg>
<!-- MDI scrollbars -->
<div class="a" style="left:1421px;top:86px;width:18px;height:746px;background:#ececec;border-left:1px solid #e4e4e4"></div>
<div class="a" style="left:1425px;top:93px;width:0;height:0;border-left:4px solid transparent;border-right:4px solid transparent;border-bottom:4px solid #333"></div>
<div class="a" style="left:1422px;top:109px;width:15px;height:497px;border:1px solid #999;border-radius:2px;background:linear-gradient(to right,#f5f5f5,#e6e6e6 50%,#cfcfcf)"></div>
<div class="a" style="left:1426px;top:354px;width:7px;height:7px;background:repeating-linear-gradient(#444 0 1px,transparent 1px 3px)"></div>
<div class="a" style="left:1425px;top:820px;width:0;height:0;border-left:4px solid transparent;border-right:4px solid transparent;border-top:4px solid #333"></div>
<div class="a" style="left:0;top:832px;width:1439px;height:18px;background:#ececec"></div>
<div class="a" style="left:7px;top:837px;width:0;height:0;border-top:4px solid transparent;border-bottom:4px solid transparent;border-right:4px solid #333"></div>
<div class="a" style="left:58px;top:834px;width:1344px;height:15px;border:1px solid #999;border-radius:2px;background:linear-gradient(#f6f6f6,#eaeaea 50%,#d5d5d7 51%,#cacacc)"></div>
<div class="a" style="left:726px;top:838px;width:7px;height:7px;background:repeating-linear-gradient(to right,#444 0 1px,transparent 1px 3px)"></div>
<div class="a" style="left:1410px;top:837px;width:0;height:0;border-top:4px solid transparent;border-bottom:4px solid transparent;border-left:4px solid #333"></div>
<div class="a" style="left:696px;top:373px;width:717px;height:460px;background:linear-gradient(#9ab5d6 0px,#afc6e2 30px,#b9d1ea 30px);border:1px solid #1a1a1a;border-bottom:none;border-radius:6px 6px 0 0;overflow:hidden">
<svg class="a" style="left:9px;top:10px" width="16" height="14"><defs><linearGradient id="tg" x1="0" y1="0" x2="0" y2="1"><stop offset="0" stop-color="#3a6aa8"/><stop offset="1" stop-color="#4ab060"/></linearGradient></defs><rect x="0" y="0" width="14" height="13" fill="#777"/><rect x="0" y="1" width="13" height="11" fill="#fdfdfd"/><rect x="2" y="3" width="5" height="7" fill="url(#tg)"/><rect x="11" y="3" width="1" height="4" fill="#3a8aa0"/><rect x="8" y="9" width="3" height="1.5" fill="#bbb"/></svg>
<div class="a" style="left:30px;top:9px;font-size:13px;color:#000">[Result Window] - Noname</div>
<div class="wbtn" style="left:610px;top:9px;width:31px;height:18px;border-color:#5d6e88"></div>
<div class="wbtn" style="left:643px;top:9px;width:31px;height:18px;border-color:#5d6e88"></div>
<div class="wbtn" style="left:676px;top:9px;width:32px;height:18px;border-color:#4a1010;background:linear-gradient(#e9a99c 0%,#dc7e6c 45%,#c53a22 52%,#d56a52 100%)"></div>
</div>
<div class="a" style="left:704px;top:403px;width:701px;height:430px;background:#fff;border-left:1px solid #828790;border-top:1px solid #828790;overflow:hidden">
<div class="hdr" style="left:1px;width:50px;text-align:left;padding:0 0 0 10px;background:linear-gradient(#f6f6f6,#ececec);border-bottom:1px solid #a0a0a0;border-top:1px solid #fff">No.</div>
<div class="hdr" style="left:51px;width:111px;text-align:right;padding:0 5px;background:linear-gradient(#f6f6f6,#ececec);border-bottom:1px solid #a0a0a0;border-top:1px solid #fff">Age [h:m:s:ms]</div>
<div class="hdr" style="left:162px;width:108px;text-align:right;padding:0 5px;background:linear-gradient(#f6f6f6,#ececec);border-bottom:1px solid #a0a0a0;border-top:1px solid #fff">Theta(M)[deg]</div>
<div class="hdr" style="left:270px;width:91px;text-align:right;padding:0 5px;background:linear-gradient(#f6f6f6,#ececec);border-bottom:1px solid #a0a0a0;border-top:1px solid #fff">IFT [mN/m]</div>
<div class="hdr" style="left:361px;width:66px;text-align:right;padding:0 5px;background:linear-gradient(#f6f6f6,#ececec);border-bottom:1px solid #a0a0a0;border-top:1px solid #fff">Vol [ul]</div>
<div class="hdr" style="left:427px;width:98px;text-align:right;padding:0 5px;background:linear-gradient(#f6f6f6,#ececec);border-bottom:1px solid #a0a0a0;border-top:1px solid #fff">Area [mm*2]</div>
<div class="hdr" style="left:525px;width:76px;text-align:right;padding:0 5px;background:linear-gradient(#f6f6f6,#ececec);border-bottom:1px solid #a0a0a0;border-top:1px solid #fff">BD [mm]</div>
<div class="hdr" style="left:601px;width:65px;text-align:left;padding:0 4px;background:linear-gradient(#f6f6f6,#ececec);border-bottom:1px solid #a0a0a0;border-top:1px solid #fff">System</div>
<div class="hdr" style="left:666px;width:100px;text-align:left;padding:0 0 0 19px;background:linear-gradient(#f6f6f6,#ececec);border-bottom:1px solid #a0a0a0;border-top:1px solid #fff">Theta(S)</div>
<div class="a" style="left:2px;top:23px;width:14px;height:14px;border:2px solid #000;background:#fff"><svg width="10" height="10" style="position:absolute;left:0;top:0"><path d="M1.5 5 L4 7.5 L9 1.5" stroke="#000" stroke-width="2" fill="none"/></svg></div>
<svg class="a" style="left:21px;top:22px" width="13" height="16"><path d="M3.5 0.5 H9.5 Q12.5 4 12.5 9 Q12.5 15.5 6.5 15.5 Q0.5 15.5 0.5 9 Q0.5 4 3.5 0.5Z" fill="#000"/><path d="M6.5 2.5 Q8.5 5 8.5 8 Q8.5 12 6.5 12.5 Q4.5 12 4.5 8 Q4.5 5 6.5 2.5Z" fill="#bbb"/></svg>
<div class="cell" style="left:38px;top:21px;text-align:left">0...</div>
<div class="cell" style="left:51px;top:21px;width:111px;padding-right:6px">00:00:00:000</div>
<div class="cell" style="left:162px;top:21px;width:108px;padding-right:6px">80.5</div>
<div class="cell" style="left:270px;top:21px;width:91px;padding-right:6px">0.770</div>
<div class="cell" style="left:361px;top:21px;width:66px;padding-right:6px">1.53</div>
<div class="cell" style="left:427px;top:21px;width:98px;padding-right:6px">5.13</div>
<div class="cell" style="left:525px;top:21px;width:76px;padding-right:6px">1.779</div>
<div class="a" style="left:2px;top:41px;width:14px;height:14px;border:2px solid #000;background:#fff"><svg width="10" height="10" style="position:absolute;left:0;top:0"><path d="M1.5 5 L4 7.5 L9 1.5" stroke="#000" stroke-width="2" fill="none"/></svg></div>
<svg class="a" style="left:21px;top:40px" width="13" height="16"><path d="M3.5 0.5 H9.5 Q12.5 4 12.5 9 Q12.5 15.5 6.5 15.5 Q0.5 15.5 0.5 9 Q0.5 4 3.5 0.5Z" fill="#000"/><path d="M6.5 2.5 Q8.5 5 8.5 8 Q8.5 12 6.5 12.5 Q4.5 12 4.5 8 Q4.5 5 6.5 2.5Z" fill="#bbb"/></svg>
<div class="cell" style="left:38px;top:39px;text-align:left">0...</div>
<div class="cell" style="left:51px;top:39px;width:111px;padding-right:6px">00:00:00:000</div>
<div class="cell" style="left:162px;top:39px;width:108px;padding-right:6px">80.5</div>
<div class="cell" style="left:270px;top:39px;width:91px;padding-right:6px">0.770</div>
<div class="cell" style="left:361px;top:39px;width:66px;padding-right:6px">1.53</div>
<div class="cell" style="left:427px;top:39px;width:98px;padding-right:6px">5.13</div>
<div class="cell" style="left:525px;top:39px;width:76px;padding-right:6px">1.779</div>
<svg class="a" style="left:1px;top:58px" width="18" height="17"><rect x="1" y="1" width="15" height="15" fill="#fff" stroke="#00f" stroke-width="1.6"/><rect x="2" y="2" width="13" height="13" fill="none" stroke="#0ff" stroke-width=".6"/><rect x="4" y="8" width="2" height="6" fill="#f00"/><rect x="7" y="5" width="2" height="9" fill="#080"/><rect x="10" y="9" width="2" height="5" fill="#f0f"/><rect x="13" y="3" width="2" height="11" fill="#880"/></svg>
<svg class="a" style="left:19px;top:58px" width="18" height="17"><path d="M1 8.5 H10" stroke="#000080" stroke-width="3"/><path d="M9 1 L17 8.5 L9 16Z" fill="#000080"/></svg>
<div class="cell" style="left:38px;top:57px;text-align:left">0...</div>
<div class="cell" style="left:51px;top:57px;width:111px;padding-right:6px"></div>
<div class="cell" style="left:162px;top:57px;width:108px;padding-right:6px"></div>
<div class="cell" style="left:276px;top:57px;text-align:left">0.770 +- 0....</div>
<div class="cell" style="left:361px;top:57px;width:66px;padding-right:6px">1.53</div>
<div class="cell" style="left:427px;top:57px;width:98px;padding-right:6px">5.13</div>
<div class="cell" style="left:525px;top:57px;width:76px;padding-right:6px">0.350</div>
<div class="a" style="left:36px;top:40px;width:700px;height:18px;border:1px dotted #000;border-right:none"></div>
</div>
<div class="a" style="left:1405px;top:403px;width:8px;height:430px;background:#b9d1ea;border-left:1px solid #ddd"></div>
<div class="a" style="left:1413px;top:378px;width:1px;height:455px;background:#111"></div>
<div class="a" style="left:0;top:86px;width:2px;height:764px;background:linear-gradient(to right,#6a6a6a 0 1px,#9a9a9a 1px)"></div>
<!-- status bar -->
<div class="a" style="left:0;top:850px;width:1439px;height:18px;background:#f0f0f0"></div>
<div class="st" style="left:7px;width:1125px;padding-left:5px">AR=1.0000  B=0.8400  x0=636.3  z0=756.5  tilt= 0.1  E=113.2  IFT=0.77</div>
<div class="st" style="left:1137px;width:95px;padding-left:4px">[166,211]: 255</div>
<div class="st" style="left:1237px;width:55px;padding-left:5px;color:#405070;background:#f6f6f6">00:07:5:</div>
<div class="st" style="left:1297px;width:71px;text-align:center;font-weight:bold">Freezed</div>
<div class="st" style="left:1373px;width:58px;text-align:center;font-weight:bold">NA</div>
<svg class="a" style="left:14px;top:864px" width="26" height="6"><ellipse cx="13" cy="6" rx="9" ry="3.5" fill="none" stroke="#2a6aa0" stroke-width="1"/></svg>
<svg class="a" style="left:0;top:0" width="1439" height="868"><rect x="1343.5" y="8.5" width="11" height="4" rx="1.2" fill="#f6f6f6" stroke="#2a2a2a"/><rect x="1372.5" y="2.5" width="8" height="8" rx="1" fill="#f6f6f6" stroke="#2a2a2a"/><rect x="1369.5" y="5.5" width="8" height="8" rx="1" fill="#f6f6f6" stroke="#2a2a2a"/><rect x="1372.5" y="8.5" width="2" height="2" fill="#7f8fa6" stroke="#2a2a2a"/><path d="M1407.5 4.5 L1417.5 11.5 M1417.5 4.5 L1407.5 11.5" stroke="#2a2a2a" stroke-width="4.6" stroke-linecap="square"/><path d="M1407.5 4.5 L1417.5 11.5 M1417.5 4.5 L1407.5 11.5" stroke="#f6f6f6" stroke-width="2.5999999999999996" stroke-linecap="square"/><rect x="905.5" y="98.5" width="10" height="4" rx="1.2" fill="#f6f6f6" stroke="#2a2a2a"/><rect x="938.5" y="94.5" width="10" height="8" rx="1" fill="#f6f6f6" stroke="#2a2a2a"/><rect x="941.5" y="97.5" width="4" height="2" fill="#7f8fa6" stroke="#2a2a2a"/><path d="M972.5 95.5 L980.5 101.5 M980.5 95.5 L972.5 101.5" stroke="#2a2a2a" stroke-width="3.8" stroke-linecap="square"/><path d="M972.5 95.5 L980.5 101.5 M980.5 95.5 L972.5 101.5" stroke="#f6f6f6" stroke-width="1.7999999999999998" stroke-linecap="square"/><rect x="1317.5" y="391.5" width="10" height="4" rx="1.2" fill="#f6f6f6" stroke="#2a2a2a"/><rect x="1350.5" y="387.5" width="10" height="8" rx="1" fill="#f6f6f6" stroke="#2a2a2a"/><rect x="1353.5" y="390.5" width="4" height="2" fill="#7f8fa6" stroke="#2a2a2a"/><path d="M1384.5 388.5 L1392.5 394.5 M1392.5 388.5 L1384.5 394.5" stroke="#2a2a2a" stroke-width="3.8" stroke-linecap="square"/><path d="M1384.5 388.5 L1392.5 394.5 M1392.5 388.5 L1384.5 394.5" stroke="#f6f6f6" stroke-width="1.7999999999999998" stroke-linecap="square"/></svg>
</body></html>
